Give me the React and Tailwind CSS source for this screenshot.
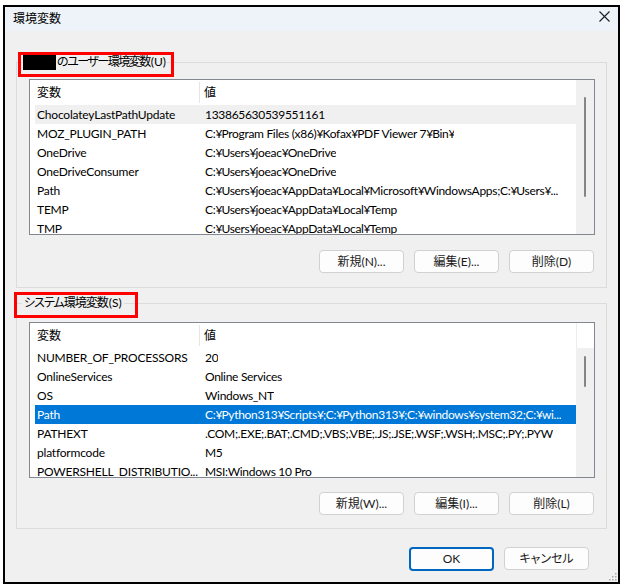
import React from 'react'

const userVars = [
  ['ChocolateyLastPathUpdate', '133865630539551161'],
  ['MOZ_PLUGIN_PATH', 'C:¥Program Files (x86)¥Kofax¥PDF Viewer 7¥Bin¥'],
  ['OneDrive', 'C:¥Users¥joeac¥OneDrive'],
  ['OneDriveConsumer', 'C:¥Users¥joeac¥OneDrive'],
  ['Path', 'C:¥Users¥joeac¥AppData¥Local¥Microsoft¥WindowsApps;C:¥Users¥...'],
  ['TEMP', 'C:¥Users¥joeac¥AppData¥Local¥Temp'],
  ['TMP', 'C:¥Users¥joeac¥AppData¥Local¥Temp'],
]

const systemVars = [
  ['NUMBER_OF_PROCESSORS', '20'],
  ['OnlineServices', 'Online Services'],
  ['OS', 'Windows_NT'],
  ['Path', 'C:¥Python313¥Scripts¥;C:¥Python313¥;C:¥windows¥system32;C:¥wi...'],
  ['PATHEXT', '.COM;.EXE;.BAT;.CMD;.VBS;.VBE;.JS;.JSE;.WSF;.WSH;.MSC;.PY;.PYW'],
  ['platformcode', 'M5'],
  ['POWERSHELL_DISTRIBUTIO...', 'MSI:Windows 10 Pro'],
]

// the yen sign is narrower in the Windows font, so tighten it a bit
const Yen = ({ text }) =>
  text.split('¥').map((part, i) => (
    <React.Fragment key={i}>
      {i > 0 && <span className="tracking-[-1px]">¥</span>}
      {part}
    </React.Fragment>
  ))

const Row = ({ name, value, state }) => {
  const bg =
    state === 'selected' ? 'bg-[#0078d7] text-white' : state === 'hover' ? 'bg-[#f0f0f0] text-black' : 'text-black'
  return (
    <div className={`flex h-[19px] shrink-0 items-center ${bg}`}>
      <div className="w-[164px] shrink-0 whitespace-nowrap pl-[2px] tracking-[-0.2px]">{name}</div>
      <div className="min-w-0 overflow-hidden whitespace-nowrap pl-[6px] tracking-[-0.3px]">
        <Yen text={value} />
      </div>
    </div>
  )
}

const VarList = ({ rows, hoverIndex, selectedIndex, thumbTop, thumbHeight, whiteHeader }) => (
  <div className="flex h-[156px] min-w-0 overflow-hidden border border-[#828790] bg-white">
    <div className="flex min-w-0 flex-1 flex-col overflow-hidden">
      {/* header */}
      <div className="flex h-[25px] shrink-0 items-center">
        <div className="w-[169px] shrink-0 pl-[7px]">変数</div>
        <div className="h-[21px] w-px bg-[#e5e5e5]" />
        <div className="pl-[4px]">値</div>
      </div>
      <div className="flex flex-col pl-[5px]">
        {rows.map(([n, v], i) => (
          <Row
            key={n + i}
            name={n}
            value={v}
            state={i === selectedIndex ? 'selected' : i === hoverIndex ? 'hover' : ''}
          />
        ))}
      </div>
    </div>
    {/* scrollbar */}
    <div className="flex w-[18px] shrink-0 flex-col">
      {whiteHeader && <div className="h-[25px] shrink-0 border-l border-[#ececec] bg-white" />}
      <div className="flex flex-1 flex-col items-center bg-[#f0f0f0]" style={{ paddingTop: thumbTop }}>
        <div className="w-[2px] rounded-full bg-[#858585]" style={{ height: thumbHeight }} />
      </div>
    </div>
  </div>
)

const Btn = ({ children, primary }) => (
  <button
    className={`flex w-[85px] items-center justify-center rounded-[4px] bg-[#fdfdfd] text-[12px] text-[#1b1b1b] ${
      primary ? 'h-[24px] border-2 border-[#0067c0]' : 'h-[23px] border border-[#d1d1d1]'
    }`}
  >
    {children}
  </button>
)

export default function App() {
  return (
    <div className="relative h-[588px] w-[624px] overflow-hidden bg-white pl-[3px] pt-[5px] font-['Lato','Noto_Sans_CJK_JP',sans-serif] text-[12px] leading-[16px] [font-feature-settings:'palt']">
      <div className="relative flex h-[579px] w-[617px] flex-col border-2 border-black bg-[#f0f0f0]">
        {/* title bar */}
        <div className="flex h-[24px] shrink-0 items-center justify-between bg-[#eef3fa] pl-[8px] pr-[8px]">
          <span className="text-black">環境変数</span>
          <svg width="11" height="11" viewBox="0 0 11 11" className="mt-[-6px]">
            <path d="M0.5 0.5 L10.5 10.5 M10.5 0.5 L0.5 10.5" stroke="#1a1a1a" strokeWidth="1.1" />
          </svg>
        </div>

        <div className="flex min-w-0 flex-1 flex-col px-[11px]">
          {/* user variables */}
          <fieldset className="mt-[23px] min-w-0 border border-[#dcdcdc] pb-[14px] pl-[12px] pr-[11px] pt-[9px]">
            <legend className="-ml-[7px] flex h-[16px] items-center px-[1px] text-black">
              <span className="mr-px inline-block h-[15px] w-[33px] bg-black" />
              <span className="tracking-[-1.5px]">のユーザー環境変数</span>
              <span className="ml-[1px]">(U)</span>
            </legend>
            <VarList rows={userVars} hoverIndex={0} thumbTop={17} thumbHeight={100} />
            <div className="mt-[15px] flex justify-end gap-[10px] pr-[1px]">
              <Btn>新規(N)...</Btn>
              <Btn>編集(E)...</Btn>
              <Btn>削除(D)</Btn>
            </div>
          </fieldset>

          {/* system variables */}
          <fieldset className="mt-[7px] min-w-0 border border-[#dcdcdc] pb-[13px] pl-[12px] pr-[11px] pt-[11px]">
            <legend className="-ml-[7px] flex h-[16px] items-center px-[2px] text-black">
              <span className="tracking-[-1px]">システム環境変数</span>
              <span className="ml-[1px]">(S)</span>
            </legend>
            <VarList rows={systemVars} selectedIndex={3} thumbTop={8} thumbHeight={31} whiteHeader />
            <div className="mt-[14px] flex justify-end gap-[10px] pr-[1px]">
              <Btn>新規(W)...</Btn>
              <Btn>編集(I)...</Btn>
              <Btn>削除(L)</Btn>
            </div>
          </fieldset>

          <div className="mt-[18px] flex justify-end gap-[10px] pr-[18px]">
            <Btn primary>OK</Btn>
            <Btn>キャンセル</Btn>
          </div>
        </div>

        {/* resize grip */}
        <svg width="9" height="9" viewBox="0 0 9 9" className="absolute bottom-[1px] right-[1px]">
          {[[7, 1], [7, 4], [4, 4], [7, 7], [4, 7], [1, 7]].map(([x, y]) => (
            <rect key={`${x}-${y}`} x={x} y={y} width="1.5" height="1.5" fill="#a8a8a8" />
          ))}
        </svg>
      </div>

      {/* red annotation boxes */}
      <div className="absolute left-[18px] top-[52px] h-[25px] w-[156px] border-[3px] border-[#ff0000]" />
      <div className="absolute left-[14px] top-[292px] h-[26px] w-[124px] border-[3px] border-[#ff0000]" />
    </div>
  )
}
